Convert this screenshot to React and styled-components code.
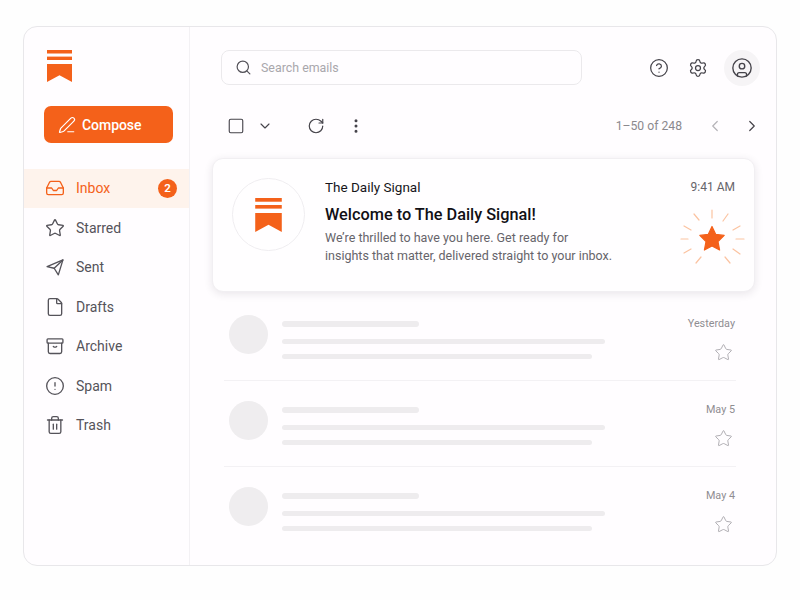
import styled, { createGlobalStyle } from "styled-components";
import {
  ChevronDown,
  ChevronLeft,
  ChevronRight,
  CircleAlert,
  CircleHelp,
  CircleUser,
  EllipsisVertical,
  File,
  Inbox,
  PenLine,
  RotateCw,
  Search,
  Settings,
  Square,
  Star,
  Trash2,
} from "lucide-react";

const ORANGE = "#f4611a";

const GlobalStyle = createGlobalStyle`
  html, body {
    margin: 0;
    padding: 0;
    background: #fefefe;
    font-family: "Roboto", "Noto Sans", sans-serif;
  }
`;

const Logo = ({ width = 25, height = 32 }) => (
  <svg width={width} height={height} viewBox="0 0 25 32" fill={ORANGE}>
    <rect x="0" y="0" width="25" height="3.5" />
    <rect x="0" y="6.6" width="25" height="3.4" />
    <path d="M0 14H25V32L12.5 25.2L0 32Z" />
  </svg>
);

const SentIcon = (props) => (
  <svg
    width="20"
    height="20"
    viewBox="0 0 24 24"
    fill="none"
    stroke="currentColor"
    strokeWidth="1.8"
    strokeLinejoin="round"
    strokeLinecap="round"
    {...props}
  >
    <path d="M2.5 11.5L21.5 3.5L16 21.5L11 13.5Z" />
    <path d="M11 13.5L21.5 3.5" />
  </svg>
);

const ArchiveIcon = (props) => (
  <svg
    width="20"
    height="20"
    viewBox="0 0 24 24"
    fill="none"
    stroke="currentColor"
    strokeWidth="1.7"
    strokeLinejoin="round"
    strokeLinecap="round"
    {...props}
  >
    <rect x="2.5" y="3.5" width="19" height="5" rx="1" />
    <path d="M4 8.5V19a2 2 0 0 0 2 2h12a2 2 0 0 0 2-2V8.5" />
    <path d="M10 12.5c1.2 1 2.8 1 4 0" />
  </svg>
);

const Burst = () => (
  <svg width="66" height="66" viewBox="-33 -33 66 66">
    <g stroke="#fbc3a1" strokeWidth="1.2" strokeLinecap="round">
      <path d="M0 -29V-21" />
      <path d="M16 -25L11 -18" />
      <path d="M28 -13L21 -9" />
      <path d="M32 0H24" />
      <path d="M28 15L21 10" />
      <path d="M18 24L13 18" />
      <path d="M-16 24L-11 18" />
      <path d="M-28 14L-21 10" />
      <path d="M-31 0H-24" />
      <path d="M-28 -13L-21 -9" />
      <path d="M-18 -25L-13 -19" />
    </g>
    <path
      d="M0 -12.5L3.8 -4.6L12.2 -3.6L6 2.5L7.6 11L0 6.9L-7.6 11L-6 2.5L-12.2 -3.6L-3.8 -4.6Z"
      fill={ORANGE}
      stroke={ORANGE}
      strokeWidth="1.2"
      strokeLinejoin="round"
    />
  </svg>
);

const navItems = [
  { label: "Inbox", Icon: Inbox, active: true, badge: 2 },
  { label: "Starred", Icon: Star },
  { label: "Sent", Icon: SentIcon },
  { label: "Drafts", Icon: File },
  { label: "Archive", Icon: ArchiveIcon },
  { label: "Spam", Icon: CircleAlert },
  { label: "Trash", Icon: Trash2 },
];

const placeholderRows = [
  { date: "Yesterday", divider: true },
  { date: "May 5", divider: true },
  { date: "May 4", divider: false },
];

export default function App() {
  return (
    <>
      <GlobalStyle />
      <Page>
        <Frame>
          <Sidebar>
            <LogoSlot>
              <Logo />
            </LogoSlot>
            <ComposeButton>
              <PenLine size={18} strokeWidth={1.6} />
              Compose
            </ComposeButton>
            <Nav>
              {navItems.map(({ label, Icon, active, badge }) => (
                <NavRow key={label} $active={active}>
                  <Icon size={20} strokeWidth={1.6} />
                  <NavLabel>{label}</NavLabel>
                  {badge && <Badge>{badge}</Badge>}
                </NavRow>
              ))}
            </Nav>
          </Sidebar>

          <Main>
            <TopBar>
              <SearchBox>
                <Search size={17} strokeWidth={1.7} color="#55535a" />
                <SearchText>Search emails</SearchText>
              </SearchBox>
              <TopIcons>
                <CircleHelp size={20} strokeWidth={1.5} />
                <Settings size={20} strokeWidth={1.5} />
                <UserBubble>
                  <CircleUser size={22} strokeWidth={1.5} />
                </UserBubble>
              </TopIcons>
            </TopBar>

            <Toolbar>
              <ToolGroup>
                <Square size={18} strokeWidth={1.5} />
                <ChevronDown size={16} strokeWidth={1.7} />
                <RefreshSlot>
                  <RotateCw size={18} strokeWidth={1.6} />
                </RefreshSlot>
                <EllipsisVertical size={18} strokeWidth={2} />
              </ToolGroup>
              <Pager>
                <PagerText>1–50 of 248</PagerText>
                <ChevronLeft size={18} strokeWidth={1.6} color="#b5b3b8" />
                <ChevronRight size={18} strokeWidth={1.6} color="#45434a" />
              </Pager>
            </Toolbar>

            <FeatureCard>
              <AvatarCircle>
                <Logo width={27} height={34} />
              </AvatarCircle>
              <CardBody>
                <Sender>The Daily Signal</Sender>
                <Title>Welcome to The Daily Signal!</Title>
                <Preview>
                  We’re thrilled to have you here. Get ready for
                  <br />
                  insights that matter, delivered straight to your inbox.
                </Preview>
              </CardBody>
              <CardAside>
                <Time>9:41 AM</Time>
                <BurstSlot>
                  <Burst />
                </BurstSlot>
              </CardAside>
            </FeatureCard>

            <List>
              {placeholderRows.map(({ date, divider }) => (
                <Row key={date} $divider={divider}>
                  <GhostAvatar />
                  <GhostLines>
                    <GhostBar $w={137} $h={6} />
                    <GhostBar $w={323} $h={5} $top={12} />
                    <GhostBar $w={310} $h={5} $top={10} />
                  </GhostLines>
                  <RowAside>
                    <RowDate>{date}</RowDate>
                    <Star size={19} strokeWidth={1.1} color="#a5a3a8" />
                  </RowAside>
                </Row>
              ))}
            </List>
          </Main>
        </Frame>
      </Page>
    </>
  );
}

const Page = styled.div`
  box-sizing: border-box;
  width: 800px;
  height: 600px;
  padding: 26px 23px 34px;
`;

const Frame = styled.div`
  box-sizing: border-box;
  height: 100%;
  display: flex;
  background: #fffdff;
  border: 1px solid #e8e7ea;
  border-radius: 14px;
  overflow: hidden;
`;

const Sidebar = styled.aside`
  flex: 0 0 165px;
  border-right: 1px solid #f3f1f4;
`;

const LogoSlot = styled.div`
  height: 32px;
  padding: 23px 0 0 23px;
  svg {
    display: block;
  }
`;

const ComposeButton = styled.button`
  display: flex;
  align-items: center;
  gap: 6px;
  box-sizing: border-box;
  width: 129px;
  height: 37px;
  margin: 24px 0 0 20px;
  padding: 0 0 0 14px;
  border: none;
  border-radius: 7px;
  background: ${ORANGE};
  color: #fff;
  font: 500 14px "Roboto", sans-serif;
  letter-spacing: -0.05px;
`;

const Nav = styled.nav`
  margin-top: 25.5px;
`;

const NavRow = styled.div`
  display: flex;
  align-items: center;
  height: 39.5px;
  padding: 0 12px 0 21px;
  background: ${(p) => (p.$active ? "#fef3ec" : "transparent")};
  color: ${(p) => (p.$active ? ORANGE : "#55535a")};
`;

const NavLabel = styled.span`
  margin-left: 11px;
  flex: 1;
  font-size: 14px;
`;

const Badge = styled.span`
  display: flex;
  align-items: center;
  justify-content: center;
  width: 19px;
  height: 19px;
  border-radius: 50%;
  background: ${ORANGE};
  color: #fff;
  font-size: 11.5px;
  font-weight: 600;
`;

const Main = styled.main`
  flex: 1;
  min-width: 0;
  padding: 23px 21px 0 22px;
`;

const TopBar = styled.header`
  display: flex;
  align-items: center;
  justify-content: space-between;
  height: 35px;
  padding-left: 9px;
`;

const SearchBox = styled.div`
  box-sizing: border-box;
  display: flex;
  align-items: center;
  gap: 9px;
  width: 361px;
  height: 35px;
  padding-left: 13px;
  border: 1px solid #ebe9ec;
  border-radius: 8px;
  background: #fffdff;
`;

const SearchText = styled.span`
  color: #a9a7ac;
  font-size: 12.4px;
`;

const TopIcons = styled.div`
  display: flex;
  align-items: center;
  gap: 19px;
  margin-right: -5px;
  color: #45434a;
`;

const UserBubble = styled.div`
  display: flex;
  align-items: center;
  justify-content: center;
  width: 36px;
  height: 36px;
  margin-left: -3px;
  border-radius: 50%;
  background: #f6f4f6;
`;

const Toolbar = styled.div`
  display: flex;
  align-items: center;
  justify-content: space-between;
  height: 36px;
  margin-top: 23px;
  padding-left: 15px;
`;

const ToolGroup = styled.div`
  display: flex;
  align-items: center;
  gap: 12px;
  color: #45434a;
`;

const RefreshSlot = styled.span`
  display: flex;
  margin-left: 22px;
  margin-right: 10px;
`;

const Pager = styled.div`
  display: flex;
  align-items: center;
  gap: 19px;
  margin-right: -6px;
`;

const PagerText = styled.span`
  margin-right: 5px;
  color: #8b898e;
  font-size: 12.2px;
`;

const FeatureCard = styled.article`
  box-sizing: border-box;
  display: flex;
  height: 134px;
  margin-top: 14px;
  padding: 19px 19px 0 19px;
  border: 1px solid #f1eff2;
  border-radius: 11px;
  background: #fffeff;
  box-shadow: 0 2px 8px rgba(40, 30, 50, 0.1);
`;

const AvatarCircle = styled.div`
  box-sizing: border-box;
  flex: 0 0 73px;
  height: 73px;
  display: flex;
  align-items: center;
  justify-content: center;
  border: 1px solid #efedf0;
  border-radius: 50%;
`;

const CardBody = styled.div`
  flex: 1;
  margin-left: 20px;
`;

const Sender = styled.div`
  color: #16151a;
  font-size: 13.5px;
  font-weight: 400;
  line-height: 18px;
`;

const Title = styled.h2`
  margin: 8px 0 0;
  color: #111015;
  font-size: 16.3px;
  font-weight: 500;
  line-height: 22px;
`;

const Preview = styled.p`
  margin: 3px 0 0;
  color: #66646a;
  font-size: 12.5px;
  line-height: 18px;
`;

const CardAside = styled.div`
  display: flex;
  flex-direction: column;
  align-items: flex-end;
`;

const Time = styled.div`
  color: #66646a;
  font-size: 12px;
  line-height: 18px;
`;

const BurstSlot = styled.div`
  margin: 10px -10px 0 0;
  svg {
    display: block;
  }
`;

const List = styled.div`
  margin-top: 3px;
`;

const Row = styled.div`
  display: flex;
  height: 86px;
  box-sizing: border-box;
  margin: 0 19px 0 12px;
  padding: 20px 1px 0 5px;
  border-bottom: 1px solid ${(p) => (p.$divider ? "#f3f1f4" : "transparent")};
`;

const GhostAvatar = styled.div`
  flex: 0 0 39px;
  height: 39px;
  border-radius: 50%;
  background: #efedef;
`;

const GhostLines = styled.div`
  flex: 1;
  margin: 6px 0 0 14px;
`;

const GhostBar = styled.div`
  width: ${(p) => p.$w}px;
  height: ${(p) => p.$h}px;
  margin-top: ${(p) => p.$top || 0}px;
  border-radius: 3px;
  background: #eeecee;
`;

const RowAside = styled.div`
  display: flex;
  flex-direction: column;
  align-items: flex-end;
  gap: 12px;
  padding-top: 2px;
  svg {
    margin-right: 2px;
  }
`;

const RowDate = styled.div`
  color: #8f8d92;
  font-size: 10.8px;
  line-height: 14px;
`;
